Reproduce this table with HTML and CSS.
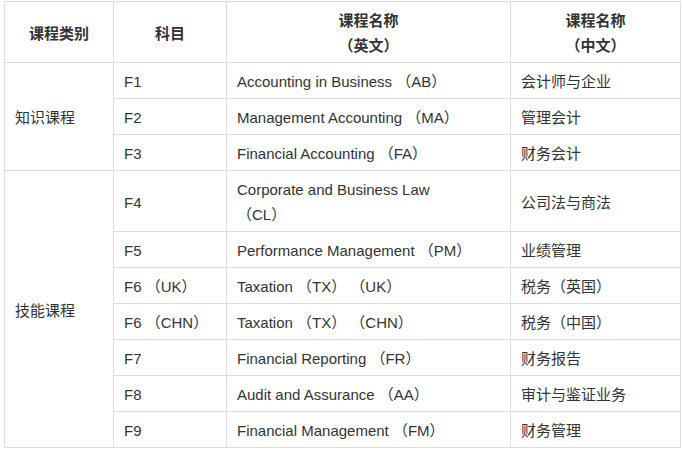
FILE: index.html
```html
<!DOCTYPE html>
<html lang="zh">
<head>
<meta charset="utf-8">
<link rel="stylesheet" href="styles.css">
</head>
<body>
<table class="course-table">
  <colgroup>
    <col class="c1">
    <col class="c2">
    <col class="c3">
    <col class="c4">
  </colgroup>
  <thead>
    <tr>
      <th>课程类别</th>
      <th>科目</th>
      <th>课程名称<br>（英文）</th>
      <th>课程名称<br>（中文）</th>
    </tr>
  </thead>
  <tbody>
    <tr>
      <td rowspan="3">知识课程</td>
      <td>F1</td>
      <td>Accounting in Business （AB）</td>
      <td>会计师与企业</td>
    </tr>
    <tr>
      <td>F2</td>
      <td>Management Accounting （MA）</td>
      <td>管理会计</td>
    </tr>
    <tr>
      <td>F3</td>
      <td>Financial Accounting （FA）</td>
      <td>财务会计</td>
    </tr>
    <tr>
      <td rowspan="7">技能课程</td>
      <td>F4</td>
      <td>Corporate and Business Law<br>（CL）</td>
      <td>公司法与商法</td>
    </tr>
    <tr>
      <td>F5</td>
      <td>Performance Management （PM）</td>
      <td>业绩管理</td>
    </tr>
    <tr>
      <td>F6 （UK）</td>
      <td>Taxation （TX） （UK）</td>
      <td>税务（英国）</td>
    </tr>
    <tr>
      <td>F6 （CHN）</td>
      <td>Taxation （TX） （CHN）</td>
      <td>税务（中国）</td>
    </tr>
    <tr>
      <td>F7</td>
      <td>Financial Reporting （FR）</td>
      <td>财务报告</td>
    </tr>
    <tr>
      <td>F8</td>
      <td>Audit and Assurance （AA）</td>
      <td>审计与鉴证业务</td>
    </tr>
    <tr>
      <td>F9</td>
      <td>Financial Management （FM）</td>
      <td>财务管理</td>
    </tr>
  </tbody>
</table>
</body>
</html>
```

FILE: styles.css
```css
html, body {
  margin: 0;
  padding: 0;
  background: #ffffff;
}

body {
  padding: 1px 3px 0 4px;
  font-family: "Liberation Sans", "Noto Sans CJK SC", sans-serif;
  font-size: 15px;
  color: #333333;
}

.course-table {
  border-collapse: collapse;
  table-layout: fixed;
  width: 677px;
}

.c1 { width: 109px; }
.c2 { width: 113px; }
.c3 { width: 284px; }
.c4 { width: 170px; }

.course-table th,
.course-table td {
  border: 1px solid #dddddd;
  padding: 6px 10px 4px;
  line-height: 25px;
  vertical-align: middle;
  text-align: left;
  font-weight: normal;
}

.course-table th {
  text-align: center;
  font-weight: bold;
}
```
